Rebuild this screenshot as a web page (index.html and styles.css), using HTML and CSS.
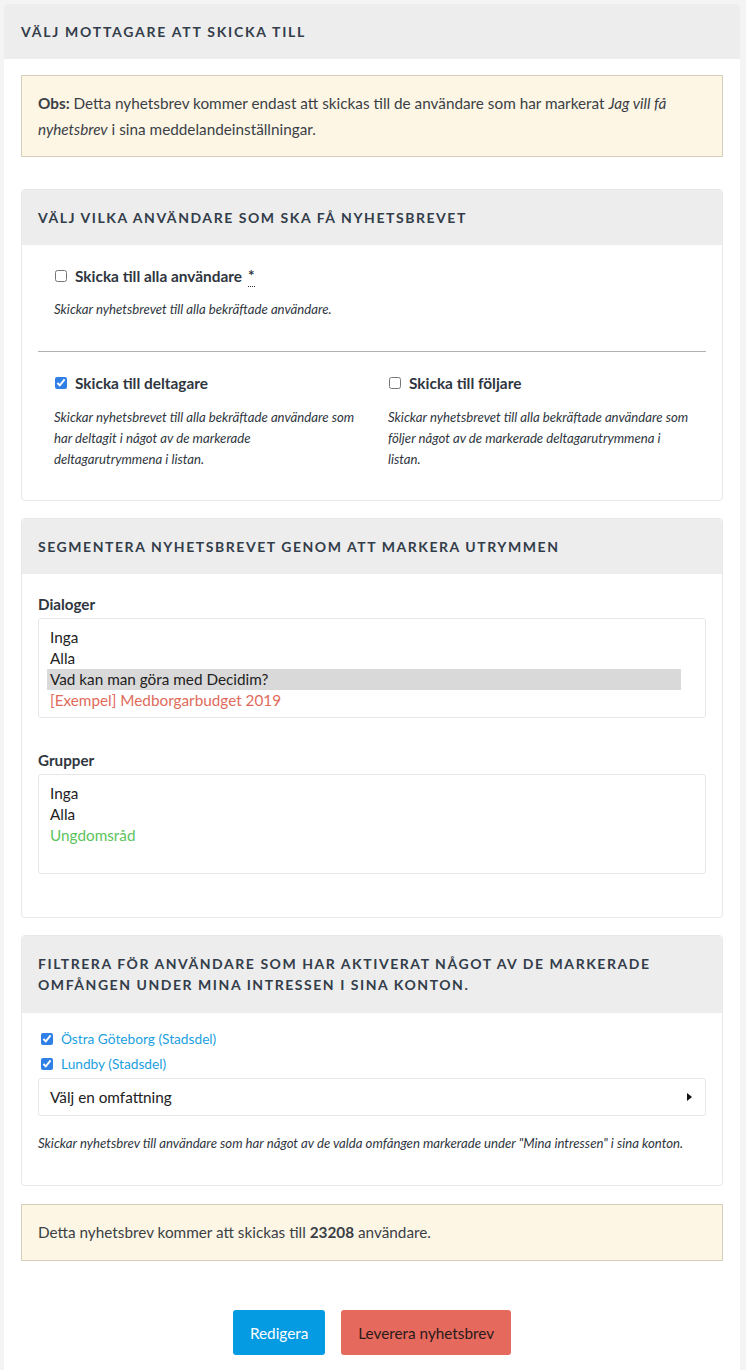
FILE: index.html
```html
<!DOCTYPE html>
<html lang="sv">
<head>
<meta charset="utf-8">
<title>Välj mottagare</title>
<link rel="stylesheet" href="styles.css">
</head>
<body>
<div class="page">
  <div class="card">
    <div class="card-header"><h2 class="title">Välj mottagare att skicka till</h2></div>
    <div class="card-body">
      <div class="callout">
        <p><strong>Obs:</strong> Detta nyhetsbrev kommer endast att skickas till de användare som har markerat <em>Jag vill få nyhetsbrev</em> i sina meddelandeinställningar.</p>
      </div>

      <div class="subcard">
        <div class="sub-header"><h3 class="title">Välj vilka användare som ska få nyhetsbrevet</h3></div>
        <div class="sub-body users">
          <div class="col">
            <label class="check-label"><input type="checkbox"> <span>Skicka till alla användare</span> <abbr class="req" title="Obligatoriskt">*</abbr></label>
            <p class="help">Skickar nyhetsbrevet till alla bekräftade användare.</p>
          </div>
          <hr class="sep">
          <div class="two-cols">
            <div class="col">
              <label class="check-label"><input type="checkbox" checked> <span>Skicka till deltagare</span></label>
              <p class="help">Skickar nyhetsbrevet till alla bekräftade användare som har deltagit i något av de markerade deltagarutrymmena i listan.</p>
            </div>
            <div class="col">
              <label class="check-label"><input type="checkbox"> <span>Skicka till följare</span></label>
              <p class="help">Skickar nyhetsbrevet till alla bekräftade användare som följer något av de markerade deltagarutrymmena i listan.</p>
            </div>
          </div>
        </div>
      </div>

      <div class="subcard">
        <div class="sub-header"><h3 class="title">Segmentera nyhetsbrevet genom att markera utrymmen</h3></div>
        <div class="sub-body segment">
          <div class="field">
            <div class="field-label">Dialoger</div>
            <div class="multi">
              <div class="opt">Inga</div>
              <div class="opt">Alla</div>
              <div class="opt selected">Vad kan man göra med Decidim?</div>
              <div class="opt red">[Exempel] Medborgarbudget 2019</div>
            </div>
          </div>
          <div class="field">
            <div class="field-label">Grupper</div>
            <div class="multi">
              <div class="opt">Inga</div>
              <div class="opt">Alla</div>
              <div class="opt green">Ungdomsråd</div>
            </div>
          </div>
        </div>
      </div>

      <div class="subcard">
        <div class="sub-header tall"><h3 class="title">Filtrera för användare som har aktiverat något av de markerade omfången under mina intressen i sina konton.</h3></div>
        <div class="sub-body scopes">
          <label class="scope"><input type="checkbox" checked> <span>Östra Göteborg (Stadsdel)</span></label>
          <label class="scope"><input type="checkbox" checked> <span>Lundby (Stadsdel)</span></label>
          <div class="picker"><span>Välj en omfattning</span><span class="tri"></span></div>
          <p class="help small">Skickar nyhetsbrev till användare som har något av de valda omfången markerade under "Mina intressen" i sina konton.</p>
        </div>
      </div>

      <div class="callout count">
        <p>Detta nyhetsbrev kommer att skickas till <strong>23208</strong> användare.</p>
      </div>

      <div class="actions">
        <button class="btn primary" type="button">Redigera</button>
        <button class="btn alert" type="button">Leverera nyhetsbrev</button>
      </div>
    </div>
  </div>
</div>
</body>
</html>
```

FILE: styles.css
```css
* { box-sizing: border-box; }
html, body { margin: 0; padding: 0; }
body {
  background: #f4f4f4;
  font-family: "Source Sans Pro", Lato, "Noto Sans", sans-serif;
  color: #3b3f45;
  font-size: 15.3px;
}
.page { padding: 4px 6px 0 4px; }
.card {
  background: #fff;
  border-radius: 4px 4px 0 0;
  min-height: 1366px;
}
.card-header {
  background: #ededed;
  height: 55px;
  padding: 17px 17px;
  border-radius: 4px 4px 0 0;
}
.title {
  margin: 0;
  font-size: 14px;
  line-height: 21px;
  font-weight: 700;
  letter-spacing: 1.55px;
  text-transform: uppercase;
  color: #333d4a;
}
.card-header .title { letter-spacing: 1.75px; }
.card-body { padding: 16px 17px 0 17px; }
.callout {
  background: #fdf6e5;
  border: 1px solid #d6cdbd;
  padding: 14px 16px;
}
.callout p { margin: 0; line-height: 26px; }
.subcard {
  border: 1px solid #e8e8e8;
  border-radius: 4px;
  margin-top: 32px;
}
.subcard + .subcard { margin-top: 17px; }
.sub-header {
  background: #ededed;
  padding: 17px 16px;
  border-radius: 4px 4px 0 0;
}
.sub-header.tall { padding-bottom: 18px; }
.sub-body { padding: 20px 16px 30px 16px; }
.col { padding: 0 16px; }
.check-label {
  display: flex;
  align-items: center;
  height: 22px;
  font-weight: 700;
  font-size: 15.4px;
  color: #2f3640;
}
.check-label input { margin: 0 8px 0 1px; width: 12px; height: 12px; accent-color: #2f7fe6; }
.req {
  margin-left: 6px;
  text-decoration: none;
  border-bottom: 1px dotted #333;
  padding-bottom: 6px;
  line-height: 10px;
  align-self: flex-start;
  margin-top: 5px;
  font-weight: 700;
}
.help {
  margin: 12px 0 0 0;
  font-size: 13.2px;
  line-height: 21px;
  font-style: italic;
  color: #2f3640;
}
.two-cols .help { margin-top: 13px; }
.sep {
  border: 0;
  border-top: 1px solid #b0b0b0;
  margin: 31px 0 20px 0;
}
.two-cols { display: grid; grid-template-columns: 1fr 1fr; }

.segment { padding: 20px 16px 43px 16px; }
.field + .field { margin-top: 32px; }
.field-label {
  font-weight: 700;
  font-size: 15.2px;
  line-height: 20px;
  color: #2f3640;
  margin-bottom: 4px;
}
.multi {
  border: 1px solid #e6e6e6;
  border-radius: 3px;
  height: 100px;
  padding: 8px 24px 7px 8px;
}
.opt { padding: 0 3px; line-height: 21px; color: #222; }
.opt.selected { background: #d9d9d9; }
.opt.red { color: #e06b5b; }
.opt.green { color: #5cc45c; }

.scopes { padding: 13px 16px 32px 16px; }
.scope {
  display: flex;
  align-items: center;
  height: 25px;
  font-size: 13.7px;
  color: #1b9fe0;
}
.scope input { margin: 0 8px 0 3px; width: 12px; height: 12px; accent-color: #2f7fe6; }
.picker {
  margin-top: 2px;
  height: 38px;
  border: 1px solid #e6e6e6;
  border-radius: 3px;
  padding: 0 13px 0 11px;
  display: flex;
  align-items: center;
  justify-content: space-between;
  color: #222;
}
.tri {
  width: 0; height: 0;
  border-top: 4px solid transparent;
  border-bottom: 4px solid transparent;
  border-left: 5px solid #111;
}
.help.small { margin-top: 17px; line-height: 20px; }

.count { margin-top: 18px; padding: 16px 16px; }
.count p { line-height: 23px; }

.actions {
  display: flex;
  justify-content: center;
  gap: 16px;
  margin-top: 49px;
}
.btn {
  height: 45px;
  border: 0;
  border-radius: 3px;
  padding: 0 17px;
  font-family: inherit;
  font-size: 15.3px;
  cursor: pointer;
}
.btn.primary { background: #059be3; color: #fff; }
.btn.alert { background: #e5695d; color: #2a1a1a; }
```
